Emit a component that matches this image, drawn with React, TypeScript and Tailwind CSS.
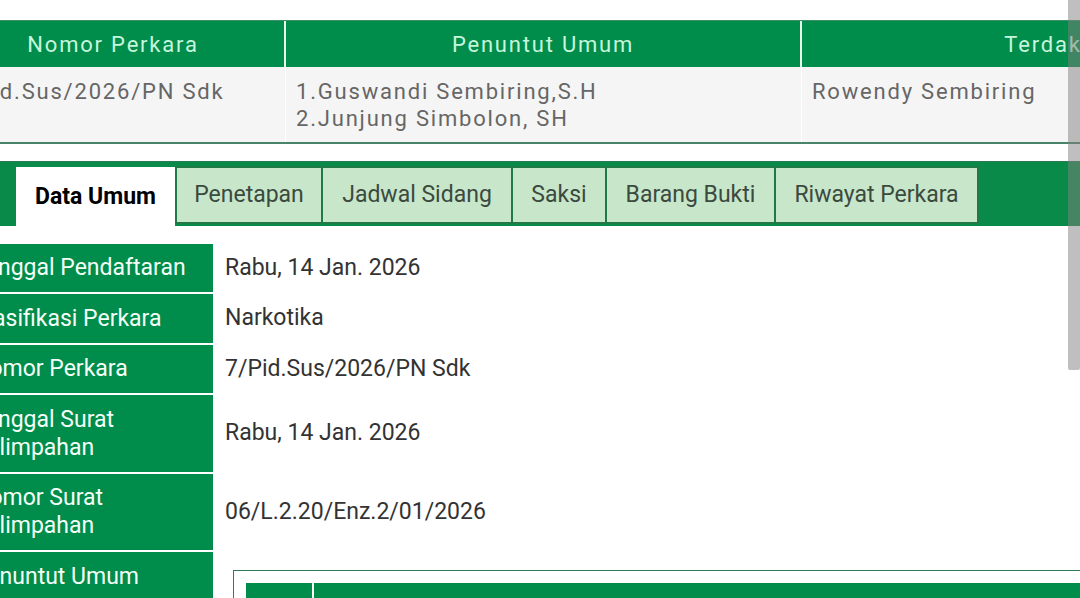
import React from "react";

const tabs = [
  { t: "Penetapan", w: "w-[148px]" },
  { t: "Jadwal Sidang", w: "w-[190px]" },
  { t: "Saksi", w: "w-[94px]" },
  { t: "Barang Bukti", w: "w-[169px]" },
  { t: "Riwayat Perkara", w: "w-[203px]" },
];

const rows = [
  { label: "Tanggal Pendaftaran", value: "Rabu, 14 Jan. 2026", h: "h-[48px]" },
  { label: "Klasifikasi Perkara", value: "Narkotika", h: "h-[49px]" },
  { label: "Nomor Perkara", value: "7/Pid.Sus/2026/PN Sdk", h: "h-[48px]" },
  { label: "Tanggal Surat Pelimpahan", value: "Rabu, 14 Jan. 2026", h: "h-[77px]" },
  { label: "Nomor Surat Pelimpahan", value: "06/L.2.20/Enz.2/01/2026", h: "h-[76px]" },
];

export default function App() {
  return (
    <div className="relative w-[1080px] h-[598px] overflow-hidden bg-white font-['Roboto','Liberation_Sans',sans-serif]">
      {/* ringkasan perkara */}
      <div className="pt-5 -ml-[58px] w-[1400px]">
        <div className="flex h-[47px] bg-[#008c4a] border-t border-[#3a8f66] text-[22px] tracking-[1.8px] text-[#c6f6dc]">
          <div className="w-[344px] flex items-center justify-center border-r-2 border-[#e8f6ee]">Nomor Perkara</div>
          <div className="w-[516px] flex items-center justify-center border-r-2 border-[#e8f6ee]">Penuntut Umum</div>
          <div className="w-[514px] flex items-center justify-center">Terdakwa</div>
        </div>
        <div className="flex h-[77px] bg-[#f5f5f5] border-b-2 border-[#4a8468] text-[22px] leading-[27px] tracking-[1.8px] text-[#666]">
          <div className="w-[344px] pl-[10px] pt-[11px] border-r border-white">7/Pid.Sus/2026/PN Sdk</div>
          <div className="w-[516px] pl-[10px] pt-[11px] border-r border-white">
            <div>1.Guswandi Sembiring,S.H</div>
            <div>2.Junjung Simbolon, SH</div>
          </div>
          <div className="w-[514px] pl-[10px] pt-[11px]">Rowendy Sembiring</div>
        </div>
      </div>

      {/* tab */}
      <div className="mt-[17px] h-[65px] bg-[#0a8a48] border-t border-[#2b7a52] flex items-start pt-[4px] pl-4">
        <div className="w-[159px] h-[60px] bg-white flex items-center justify-center text-[23px] font-bold text-black mt-[1px]">
          Data Umum
        </div>
        {tabs.map((tab, i) => (
          <div
            key={tab.t}
            className={`${tab.w} h-[58px] bg-[#c8e6c9] border-y-2 border-r-2 border-[#1f7a45] flex items-center justify-center text-[23px] text-[#3b4a3f] ${i === 0 ? "border-l-2" : ""}`}
          >
            {tab.t}
          </div>
        ))}
      </div>

      {/* data umum */}
      <div className="mt-[18px] -ml-[37px] flex flex-col gap-[2px]">
        {rows.map((r) => (
          <div key={r.label} className={`flex ${r.h}`}>
            <div className="w-[250px] shrink-0 bg-[#008c4a] pl-[10px] pr-2 flex items-center text-[23px] leading-[28px] text-[#f4fff8]">
              {r.label}
            </div>
            <div className="pl-[12px] flex items-center text-[23px] text-[#333]">{r.value}</div>
          </div>
        ))}
        <div className="flex h-[120px]">
          <div className="w-[250px] shrink-0 bg-[#008c4a] pl-[10px] pt-[11px] text-[23px] leading-[28px] text-[#f4fff8]">
            Penuntut Umum
          </div>
          <div className="shrink-0 pl-[20px] pt-[18px]">
            <div className="w-[1000px] h-[100px] border border-[#2f7a55] p-[12px]">
              <div className="flex h-[40px]">
                <div className="w-[68px] bg-[#008c4a] border-r-2 border-white" />
                <div className="flex-1 bg-[#008c4a]" />
              </div>
            </div>
          </div>
        </div>
      </div>

      {/* scrollbar */}
      <div className="absolute right-0 top-0 w-[12px] h-[370px] rounded-b-[2px] bg-[#808080]/50" />
    </div>
  );
}
